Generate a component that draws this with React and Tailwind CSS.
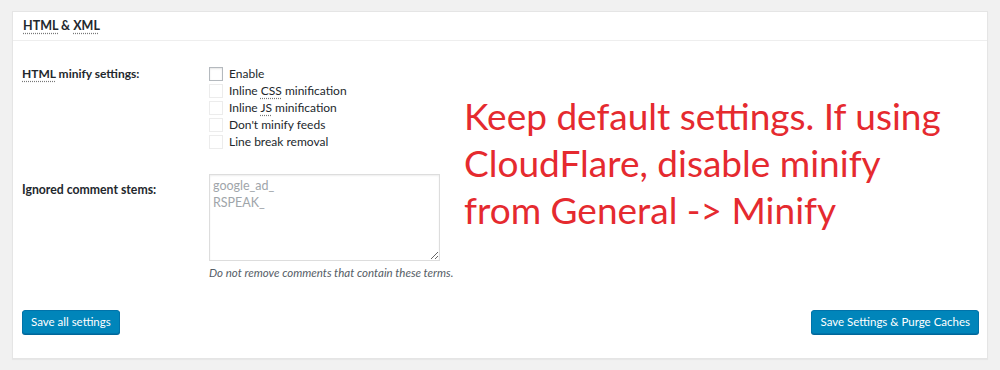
import React from "react";

const Abbr = ({ children }) => (
  <span className="underline decoration-dotted decoration-[#777] underline-offset-[3px]">{children}</span>
);

const Box = ({ active }) => (
  <span
    className={
      active
        ? "w-[14px] h-[14px] border border-[#b4b9be] bg-white shadow-[inset_0_1px_2px_rgba(0,0,0,0.1)] shrink-0"
        : "w-[14px] h-[14px] border border-[#ececec] bg-white shrink-0"
    }
  />
);

const options = [
  { label: "Enable", active: true },
  { label: <>Inline <Abbr>CSS</Abbr> minification</> },
  { label: <>Inline <Abbr>JS</Abbr> minification</> },
  { label: "Don't minify feeds" },
  { label: "Line break removal" },
];

export default function App() {
  return (
    <div className="w-[1000px] h-[370px] bg-[#f1f1f1] pt-[11px] px-[12px] text-[12px] text-[#23282d] font-['Lato','Open_Sans',sans-serif] relative">
      <div className="h-[348px] bg-white border border-[#e5e5e5] shadow-[0_1px_1px_rgba(0,0,0,0.04)] flex flex-col">
        <div className="h-[29px] border-b border-[#eee] pl-[10px] flex items-center">
          <h2 className="text-[12.5px] font-bold">
            <Abbr>HTML</Abbr> &amp; <Abbr>XML</Abbr>
          </h2>
        </div>

        <div className="pl-[9px] pr-[8px] pt-[24px] flex flex-col flex-1">
          <div className="flex">
            <div className="w-[187px] font-bold text-[12px] leading-[17px]">
              <Abbr>HTML</Abbr> minify settings:
            </div>
            <div className="flex flex-col">
              {options.map((o, i) => (
                <label key={i} className="flex items-center gap-[6px] h-[17px] leading-[17px]">
                  <Box active={o.active} />
                  <span>{o.label}</span>
                </label>
              ))}
            </div>
          </div>

          <div className="flex mt-[24px]">
            <div className="w-[187px] font-bold text-[12.25px] pt-[7px] leading-[17px]">Ignored comment stems:</div>
            <div className="flex flex-col">
              <textarea
                readOnly
                defaultValue={"google_ad_\nRSPEAK_"}
                className="w-[231px] h-[87px] border border-[#ddd] px-[3px] py-[2px] text-[12.5px] leading-[17px] text-[#a0a5aa] outline-none shadow-[inset_0_1px_2px_rgba(0,0,0,0.07)] font-['Lato',sans-serif]"
              />
              <p className="italic text-[11.5px] text-[#555d66] mt-[3px] leading-[17px]">
                Do not remove comments that contain these terms.
              </p>
            </div>
          </div>

          <div className="flex justify-between mt-auto mb-[24px]">
            <button className="h-[24px] px-[8px] bg-[#0085ba] border border-[#0073aa] rounded-[3px] shadow-[0_1px_0_#006799] text-white text-[11.5px] leading-[22px]">
              Save all settings
            </button>
            <button className="h-[24px] px-[8px] bg-[#0085ba] border border-[#0073aa] rounded-[3px] shadow-[0_1px_0_#006799] text-white text-[11.5px] leading-[22px]">
              Save Settings &amp; Purge Caches
            </button>
          </div>
        </div>
      </div>

      <div className="absolute left-[464px] top-[92px] text-[37px] leading-[47px] text-[#e52a2f] font-['Lato',sans-serif]">
        Keep default settings. If using
        <br />
        CloudFlare, disable minify
        <br />
        from General -&gt; Minify
      </div>
    </div>
  );
}
